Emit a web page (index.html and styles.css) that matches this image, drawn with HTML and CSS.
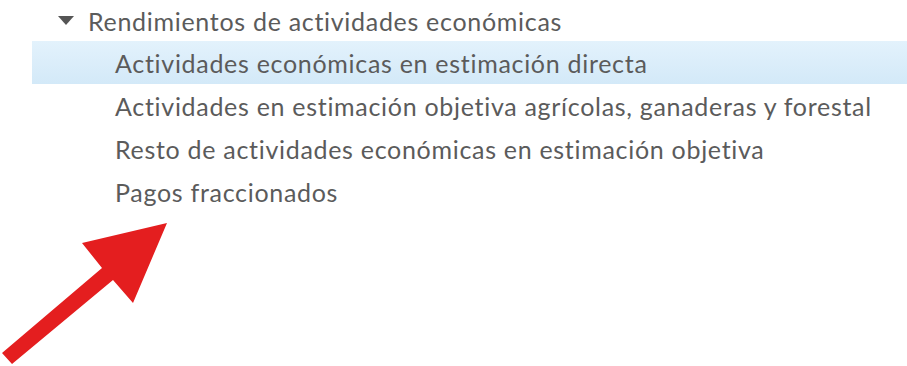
FILE: index.html
```html
<!DOCTYPE html>
<html lang="es">
<head>
<meta charset="utf-8">
<link rel="stylesheet" href="styles.css">
</head>
<body>
<div class="tree">
  <div class="node parent">
    <span class="caret"></span>
    <span class="label">Rendimientos de actividades económicas</span>
  </div>
  <div class="node child selected"><span class="label">Actividades económicas en estimación directa</span></div>
  <div class="node child"><span class="label">Actividades en estimación objetiva agrícolas, ganaderas y forestal</span></div>
  <div class="node child"><span class="label">Resto de actividades económicas en estimación objetiva</span></div>
  <div class="node child"><span class="label">Pagos fraccionados</span></div>
</div>
<svg class="arrow" width="180" height="166" viewBox="0 0 180 166">
  <polygon points="167,23 133,103 113,80 12,164 2,153 102,68 82,43" fill="#e41e1f"/>
</svg>
</body>
</html>
```
FILE: styles.css
```css
html, body {
  margin: 0;
  padding: 0;
  background: #fff;
  width: 907px;
  height: 366px;
  overflow: hidden;
  position: relative;
}
.tree {
  font-family: "Lato", "Open Sans", sans-serif;
  font-size: 25px;
  letter-spacing: 0.7px;
  color: #5b5b5b;
  padding-left: 32px;
}
.node {
  display: flex;
  align-items: center;
  height: 43px;
}
.parent {
  height: 41px;
  padding-left: 26px;
}
.caret {
  width: 0;
  height: 0;
  border-left: 8px solid transparent;
  border-right: 8px solid transparent;
  border-top: 9px solid #555;
  margin-right: 14px;
}
.child {
  padding-left: 83px;
}
.selected {
  background: linear-gradient(#e3f2fc, #d3e9f8);
}
.arrow {
  position: absolute;
  left: 0;
  top: 200px;
}
```
